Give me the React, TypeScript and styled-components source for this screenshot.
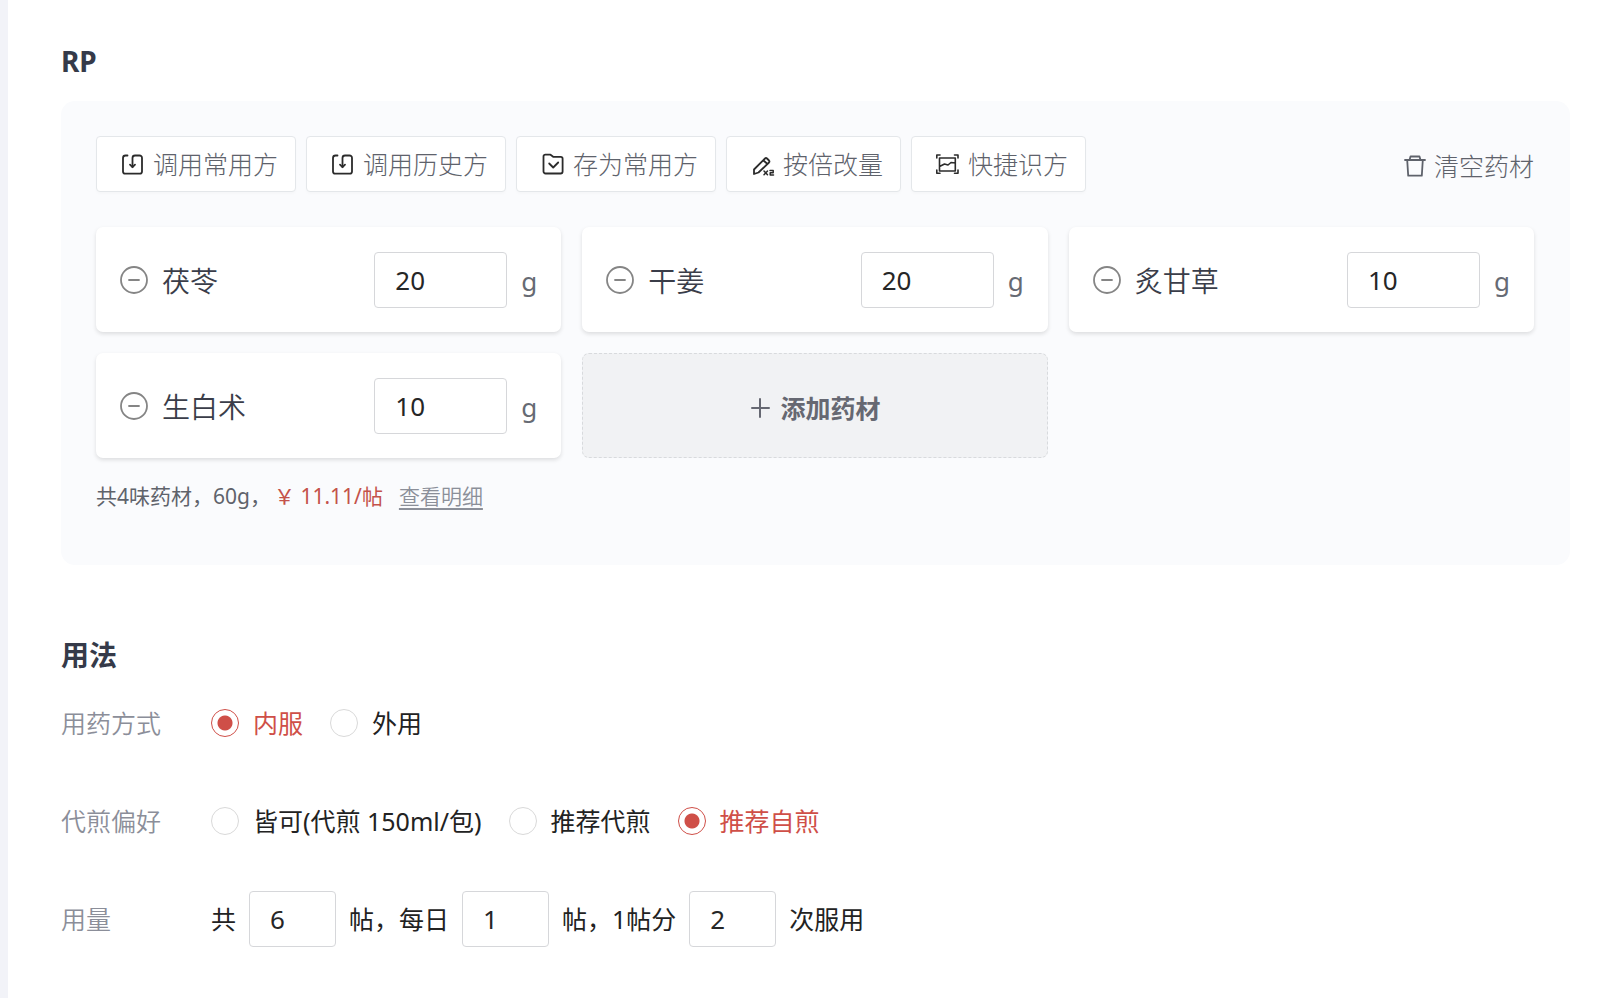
import React, { useState } from 'react';
import styled, { createGlobalStyle } from 'styled-components';

const GlobalStyle = createGlobalStyle`
  *, *::before, *::after { box-sizing: border-box; }
  body {
    margin: 0;
    background: #f2f3f8;
    color: #222222;
    font-family: "Noto Sans", "Noto Sans CJK SC", sans-serif;
    font-size: 25px;
    font-weight: 400;
    line-height: 32px;
  }
  button, input { font: inherit; color: inherit; }
`;

const Page = styled.main`
  min-height: 100vh;
  margin-left: 8px;
  padding: 43px 30px 48px 53px;
  background: #ffffff;
`;

const Heading = styled.h2`
  margin: 0;
  color: #353a49;
  font-size: 28px;
  font-weight: 700;
  line-height: 36px;
`;

const Panel = styled.section`
  margin: 22px 0 72px;
  padding: 35px 36px 55px 35px;
  border-radius: 14px;
  background: #fafbfd;
`;

const Toolbar = styled.div`
  display: flex;
  align-items: center;
  gap: 10px;
  margin-bottom: 35px;
`;

const ToolButton = styled.button`
  display: flex;
  align-items: center;
  gap: 8px;
  height: 56px;
  padding: 0 17px 0 24px;
  border: 1px solid #e4e7ea;
  border-radius: 4px;
  background: #ffffff;
  box-shadow: 0 2px 3px rgba(0, 0, 0, 0.02);
  color: #5e626b;
  font-weight: 300;
  white-space: nowrap;
  svg { color: #2b2b2b; }
`;

const ClearButton = styled.button`
  display: flex;
  align-items: center;
  gap: 7px;
  margin-left: auto;
  padding: 4px 0 0;
  border: 0;
  background: none;
  color: #5e626b;
  font-weight: 300;
  white-space: nowrap;
`;

const HerbGrid = styled.ul`
  display: grid;
  grid-template-columns: repeat(3, 1fr);
  gap: 21px;
  margin: 0;
  padding: 0;
  list-style: none;
`;

const HerbCard = styled.li`
  display: flex;
  align-items: center;
  height: 105px;
  padding: 0 24px;
  border-radius: 7px;
  background: #ffffff;
  box-shadow: 0 2px 4px rgba(0, 0, 0, 0.12);
`;

const RemoveButton = styled.button`
  display: flex;
  padding: 0;
  border: 0;
  background: none;
  color: #858585;
`;

const HerbName = styled.label`
  flex: 1;
  padding: 2px 0 0 14px;
  color: #3a3d49;
  font-size: 28px;
  font-weight: 350;
`;

const NumberBox = styled.input<{ $width: number }>`
  width: ${(p) => p.$width}px;
  height: 56px;
  padding: 0 20px;
  border: 1px solid #d6d7da;
  border-radius: 4px;
  background: #ffffff;
  color: #262626;
  font-size: 26px;
  outline: none;
`;

const Unit = styled.span`
  padding: 2px 0 0 14px;
  color: #666a73;
  font-size: 26px;
`;

const AddButton = styled.button`
  display: flex;
  align-items: center;
  justify-content: center;
  gap: 9px;
  width: 100%;
  height: 105px;
  padding: 4px 0 0;
  border: 1px dashed #d8dadd;
  border-radius: 7px;
  background: #f1f2f4;
  color: #666872;
  font-weight: 700;
`;

const Summary = styled.p`
  display: flex;
  margin: 24px 0 0;
  color: #5f636b;
  font-size: 21px;
  line-height: 28px;
`;

const Price = styled.span`
  padding: 0 16px 0 3px;
  color: #c4524a;
`;

const DetailLink = styled.a`
  color: #8b8f99;
  font-weight: 350;
  text-underline-offset: 4px;
`;

const Field = styled.div`
  display: flex;
  align-items: center;
  height: 56px;
  margin-top: 42px;
`;

const FirstField = styled(Field)`
  margin-top: 22px;
`;

const FieldLabel = styled.span`
  width: 150px;
  color: #8b8e99;
  font-weight: 350;
`;

const Options = styled.div`
  display: flex;
  gap: 27px;
`;

const Option = styled.label<{ $on: boolean }>`
  display: flex;
  align-items: center;
  gap: 14px;
  color: ${(p) => (p.$on ? '#cf4f48' : '#222222')};
`;

const Radio = styled.input`
  appearance: none;
  width: 28px;
  height: 28px;
  margin: 0;
  border: 1px solid #d9d9d9;
  border-radius: 50%;
  background: #ffffff;
  &:checked {
    border-color: #cf4f48;
    background: radial-gradient(circle, #cf4f48 7px, #ffffff 8px);
  }
`;

const Dosage = styled.div`
  display: flex;
  align-items: center;
  gap: 13px;
`;

interface IconProps {
  size?: number;
  stroke?: number;
  children: React.ReactNode;
}

const Icon = ({ size = 24, stroke = 1.8, children }: IconProps) => (
  <svg width={size} height={size} viewBox={`0 0 ${size} ${size}`} fill="none" stroke="currentColor"
    strokeWidth={stroke} strokeLinecap="round" strokeLinejoin="round" aria-hidden="true">
    {children}
  </svg>
);

const ImportIcon = () => (
  <Icon>
    <path d="M6.500 3.500H4.500a2.500 2.500 0 0 0-2.500 2.500v13.500a2.200 2.200 0 0 0 2.200 2.200h14.600a2.200 2.200 0 0 0 2.200-2.200V6a2.500 2.500 0 0 0-2.500-2.500h-4.500a2.500 2.500 0 0 0-2.500 2.500v9" />
    <path d="M9 12.700l2.500 2.500 2.500-2.500" />
  </Icon>
);

const FolderIcon = () => (
  <Icon>
    <path d="M2.500 19.500V4.500a1.800 1.800 0 0 1 1.800-1.800H9.500l3 2.200h7.300a1.800 1.800 0 0 1 1.800 1.800v12.800a2 2 0 0 1-2 2H4.500a2 2 0 0 1-2-2z" />
    <path d="M8.200 11.500l4 4 5-5" />
  </Icon>
);

const ScaleIcon = () => (
  <Icon>
    <path d="M3 17.500L14 6.500a1.500 1.500 0 0 1 2 0l2 2a1.500 1.500 0 0 1 0 2L7.500 20.500 3 22zM12.500 8.500l4 3.500" />
    <path d="M13 19l3.500 3.800M16.500 19l-3.500 3.800M19 18.500h3.200v2.200H19.200v2.300h3.300" strokeWidth="1.500" />
  </Icon>
);

const ScanIcon = () => (
  <Icon stroke={1.6}>
    <path d="M0.800 6V3H4M18.500 3h3.500v3M22 18v3.200H18.500M4 21.200H0.800V18" />
    <path d="M3.500 6h15.800v13H3.500zM3.500 14.500l5-2.500 3.500 1 3-2.500 4.300 0.500" />
  </Icon>
);

const TrashIcon = () => (
  <Icon>
    <path d="M2 6h20M6.500 6l1-3.500h9l1 3.500M4.200 6l1 15.700h13.600l1-15.700" />
  </Icon>
);

const MinusIcon = () => (
  <Icon size={28}><circle cx="14" cy="14" r="13" /><path d="M9 14h10" /></Icon>
);

const PlusIcon = () => (
  <Icon size={22} stroke={2}><path d="M3 11h17M11 2v18" /></Icon>
);

const tools = [
  { text: '调用常用方', icon: <ImportIcon /> },
  { text: '调用历史方', icon: <ImportIcon /> },
  { text: '存为常用方', icon: <FolderIcon /> },
  { text: '按倍改量', icon: <ScaleIcon /> },
  { text: '快捷识方', icon: <ScanIcon /> },
];

const herbs = [
  { name: '茯苓', grams: 20 },
  { name: '干姜', grams: 20 },
  { name: '炙甘草', grams: 10 },
  { name: '生白术', grams: 10 },
];

interface RadioRowProps {
  name: string;
  options: string[];
  initial: string;
}

const RadioRow = ({ name, options, initial }: RadioRowProps) => {
  const [value, setValue] = useState(initial);
  return (
    <Options role="radiogroup" aria-label={name}>
      {options.map((o) => (
        <Option key={o} $on={o === value}>
          <Radio type="radio" name={name} checked={o === value} onChange={() => setValue(o)} />
          {o}
        </Option>
      ))}
    </Options>
  );
};

export default function App() {
  return (
    <>
      <GlobalStyle />
      <Page>
        <Heading>RP</Heading>
        <Panel>
          <Toolbar>
            {tools.map((t) => (
              <ToolButton key={t.text} type="button">{t.icon}{t.text}</ToolButton>
            ))}
            <ClearButton type="button"><TrashIcon />清空药材</ClearButton>
          </Toolbar>
          <HerbGrid>
            {herbs.map((h, i) => (
              <HerbCard key={h.name}>
                <RemoveButton type="button" aria-label={`移除${h.name}`}><MinusIcon /></RemoveButton>
                <HerbName htmlFor={`herb-${i}`}>{h.name}</HerbName>
                <NumberBox id={`herb-${i}`} $width={133} defaultValue={h.grams} />
                <Unit>g</Unit>
              </HerbCard>
            ))}
            <li><AddButton type="button"><PlusIcon />添加药材</AddButton></li>
          </HerbGrid>
          <Summary>
            <span>共4味药材，60g，</span>
            <Price>￥ 11.11/帖</Price>
            <DetailLink href="#detail">查看明细</DetailLink>
          </Summary>
        </Panel>

        <Heading>用法</Heading>
        <FirstField>
          <FieldLabel>用药方式</FieldLabel>
          <RadioRow name="用药方式" options={['内服', '外用']} initial="内服" />
        </FirstField>
        <Field>
          <FieldLabel>代煎偏好</FieldLabel>
          <RadioRow name="代煎偏好" options={['皆可(代煎 150ml/包)', '推荐代煎', '推荐自煎']} initial="推荐自煎" />
        </Field>
        <Field>
          <FieldLabel>用量</FieldLabel>
          <Dosage>
            <label htmlFor="total">共</label>
            <NumberBox id="total" $width={87} defaultValue={6} />
            <label htmlFor="daily">帖，每日</label>
            <NumberBox id="daily" $width={87} defaultValue={1} />
            <label htmlFor="times">帖，1帖分</label>
            <NumberBox id="times" $width={87} defaultValue={2} />
            <span>次服用</span>
          </Dosage>
        </Field>
      </Page>
    </>
  );
}
